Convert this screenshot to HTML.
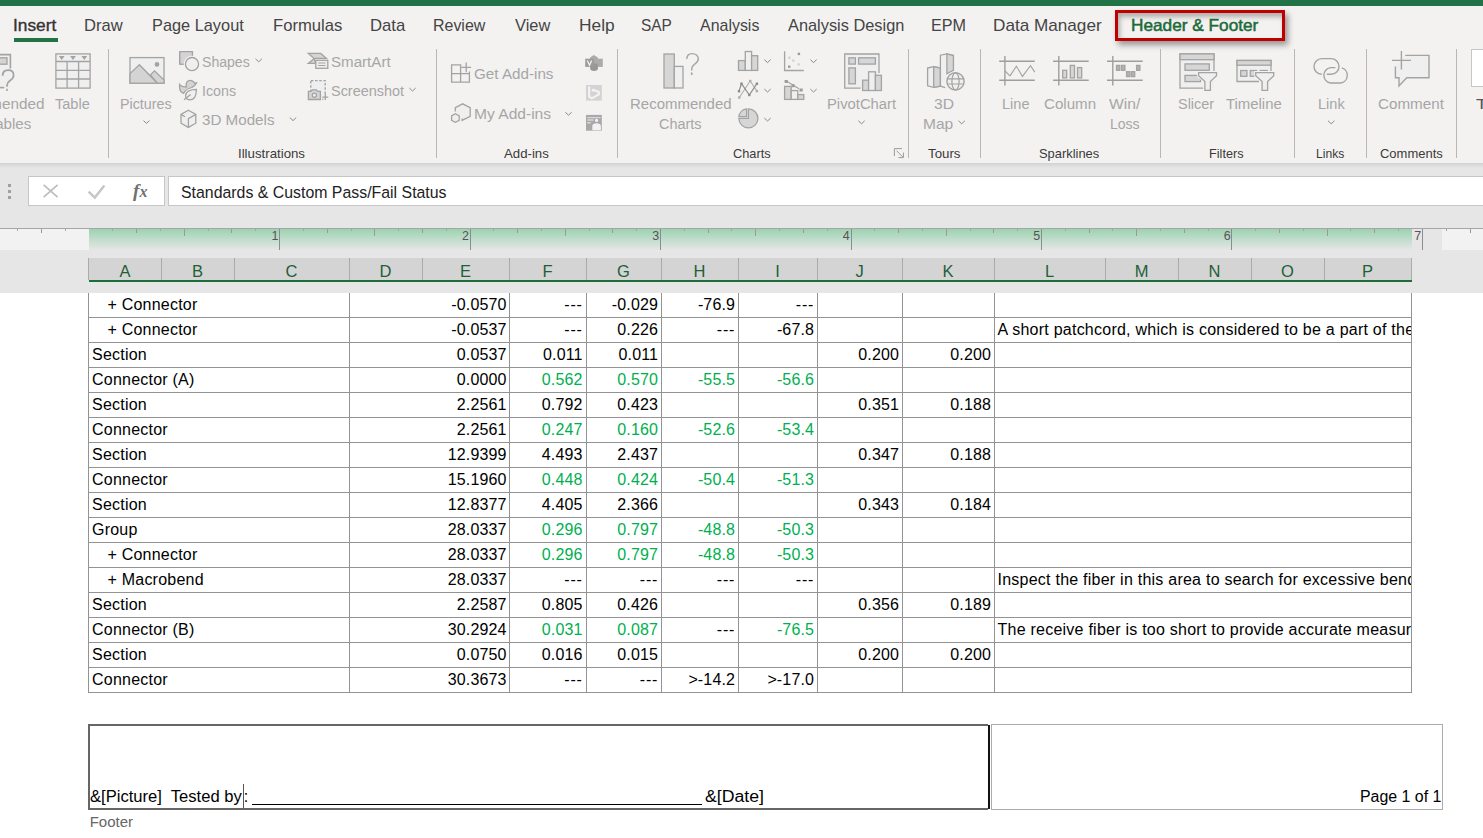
<!DOCTYPE html>
<html><head><meta charset="utf-8"><title>Excel</title><style>
html,body{margin:0;padding:0;width:1483px;height:838px;overflow:hidden;background:#fff;font-family:"Liberation Sans",sans-serif}
.t{position:absolute;white-space:pre;line-height:1;transform-origin:0 0}
.a{position:absolute;box-sizing:content-box}
svg{position:absolute;overflow:visible}
</style></head><body>
<div class=a style="left:0px;top:0px;width:1483px;height:6px;background:#217346"></div><div class=a style="left:0px;top:6px;width:1483px;height:157px;background:#f3f2f1"></div><div class=a style="left:0px;top:163px;width:1483px;height:5px;background:linear-gradient(#d2d2d2,#e6e6e6)"></div><div class=a style="left:0px;top:168px;width:1483px;height:125px;background:#e6e6e6"></div><div class=a style="left:1115px;top:10px;width:164px;height:25px;border:3px solid #c00000;box-shadow:3px 4px 6px rgba(0,0,0,.38), inset 2px 4px 5px rgba(0,0,0,.28);"></div><div class=a style="left:14px;top:38px;width:44px;height:4px;background:#217346"></div><div class=a style="left:108px;top:49px;width:1px;height:109px;background:#b9b6b3"></div><div class=a style="left:436px;top:49px;width:1px;height:109px;background:#b9b6b3"></div><div class=a style="left:617px;top:49px;width:1px;height:109px;background:#b9b6b3"></div><div class=a style="left:908px;top:49px;width:1px;height:109px;background:#b9b6b3"></div><div class=a style="left:980px;top:49px;width:1px;height:109px;background:#b9b6b3"></div><div class=a style="left:1160px;top:49px;width:1px;height:109px;background:#b9b6b3"></div><div class=a style="left:1294px;top:49px;width:1px;height:109px;background:#b9b6b3"></div><div class=a style="left:1366px;top:49px;width:1px;height:109px;background:#b9b6b3"></div><div class=a style="left:1456px;top:49px;width:1px;height:109px;background:#b9b6b3"></div><div class=a style="left:1471px;top:49px;width:12px;height:36px;background:#fff;border:1px solid #c8c6c4;border-right:none"></div><div class=a style="left:28px;top:176px;width:135px;height:28px;background:#fff;border:1px solid #c6c6c6"></div><div class=a style="left:168px;top:176px;width:1320px;height:28px;background:#fff;border:1px solid #c6c6c6"></div><div class=a style="left:8px;top:184px;width:3px;height:3px;background:#a0a0a0"></div><div class=a style="left:8px;top:190px;width:3px;height:3px;background:#a0a0a0"></div><div class=a style="left:8px;top:196px;width:3px;height:3px;background:#a0a0a0"></div><div class=a style="left:0px;top:228px;width:1483px;height:1px;background:#a6a6a6"></div><div class=a style="left:0px;top:229px;width:89px;height:21px;background:#f2f2f2"></div><div class=a style="left:89px;top:229px;width:1323px;height:21px;background:linear-gradient(#9cd3b1,#e6e6e6)"></div><div class=a style="left:1442px;top:229px;width:41px;height:21px;background:#f2f2f2"></div><div class=a style="left:17px;top:229px;width:1px;height:2px;background:#a6a6a6"></div><div class=a style="left:41px;top:229px;width:1px;height:4px;background:#9a9a9a"></div><div class=a style="left:65px;top:229px;width:1px;height:2px;background:#a6a6a6"></div><div class=a style="left:112px;top:229px;width:1px;height:2px;background:#a6a6a6"></div><div class=a style="left:136px;top:229px;width:1px;height:4px;background:#9a9a9a"></div><div class=a style="left:160px;top:229px;width:1px;height:2px;background:#a6a6a6"></div><div class=a style="left:184px;top:229px;width:1px;height:7px;background:#9a9a9a"></div><div class=a style="left:208px;top:229px;width:1px;height:2px;background:#a6a6a6"></div><div class=a style="left:231px;top:229px;width:1px;height:4px;background:#9a9a9a"></div><div class=a style="left:255px;top:229px;width:1px;height:2px;background:#a6a6a6"></div><div class=a style="left:279px;top:229px;width:1px;height:21px;background:#8c8c8c"></div><div class=a style="left:303px;top:229px;width:1px;height:2px;background:#a6a6a6"></div><div class=a style="left:327px;top:229px;width:1px;height:4px;background:#9a9a9a"></div><div class=a style="left:351px;top:229px;width:1px;height:2px;background:#a6a6a6"></div><div class=a style="left:374px;top:229px;width:1px;height:7px;background:#9a9a9a"></div><div class=a style="left:398px;top:229px;width:1px;height:2px;background:#a6a6a6"></div><div class=a style="left:422px;top:229px;width:1px;height:4px;background:#9a9a9a"></div><div class=a style="left:446px;top:229px;width:1px;height:2px;background:#a6a6a6"></div><div class=a style="left:470px;top:229px;width:1px;height:21px;background:#8c8c8c"></div><div class=a style="left:493px;top:229px;width:1px;height:2px;background:#a6a6a6"></div><div class=a style="left:517px;top:229px;width:1px;height:4px;background:#9a9a9a"></div><div class=a style="left:541px;top:229px;width:1px;height:2px;background:#a6a6a6"></div><div class=a style="left:565px;top:229px;width:1px;height:7px;background:#9a9a9a"></div><div class=a style="left:589px;top:229px;width:1px;height:2px;background:#a6a6a6"></div><div class=a style="left:612px;top:229px;width:1px;height:4px;background:#9a9a9a"></div><div class=a style="left:636px;top:229px;width:1px;height:2px;background:#a6a6a6"></div><div class=a style="left:660px;top:229px;width:1px;height:21px;background:#8c8c8c"></div><div class=a style="left:684px;top:229px;width:1px;height:2px;background:#a6a6a6"></div><div class=a style="left:708px;top:229px;width:1px;height:4px;background:#9a9a9a"></div><div class=a style="left:731px;top:229px;width:1px;height:2px;background:#a6a6a6"></div><div class=a style="left:755px;top:229px;width:1px;height:7px;background:#9a9a9a"></div><div class=a style="left:779px;top:229px;width:1px;height:2px;background:#a6a6a6"></div><div class=a style="left:803px;top:229px;width:1px;height:4px;background:#9a9a9a"></div><div class=a style="left:827px;top:229px;width:1px;height:2px;background:#a6a6a6"></div><div class=a style="left:851px;top:229px;width:1px;height:21px;background:#8c8c8c"></div><div class=a style="left:874px;top:229px;width:1px;height:2px;background:#a6a6a6"></div><div class=a style="left:898px;top:229px;width:1px;height:4px;background:#9a9a9a"></div><div class=a style="left:922px;top:229px;width:1px;height:2px;background:#a6a6a6"></div><div class=a style="left:946px;top:229px;width:1px;height:7px;background:#9a9a9a"></div><div class=a style="left:970px;top:229px;width:1px;height:2px;background:#a6a6a6"></div><div class=a style="left:993px;top:229px;width:1px;height:4px;background:#9a9a9a"></div><div class=a style="left:1017px;top:229px;width:1px;height:2px;background:#a6a6a6"></div><div class=a style="left:1041px;top:229px;width:1px;height:21px;background:#8c8c8c"></div><div class=a style="left:1065px;top:229px;width:1px;height:2px;background:#a6a6a6"></div><div class=a style="left:1089px;top:229px;width:1px;height:4px;background:#9a9a9a"></div><div class=a style="left:1112px;top:229px;width:1px;height:2px;background:#a6a6a6"></div><div class=a style="left:1136px;top:229px;width:1px;height:7px;background:#9a9a9a"></div><div class=a style="left:1160px;top:229px;width:1px;height:2px;background:#a6a6a6"></div><div class=a style="left:1184px;top:229px;width:1px;height:4px;background:#9a9a9a"></div><div class=a style="left:1208px;top:229px;width:1px;height:2px;background:#a6a6a6"></div><div class=a style="left:1231px;top:229px;width:1px;height:21px;background:#8c8c8c"></div><div class=a style="left:1255px;top:229px;width:1px;height:2px;background:#a6a6a6"></div><div class=a style="left:1279px;top:229px;width:1px;height:4px;background:#9a9a9a"></div><div class=a style="left:1303px;top:229px;width:1px;height:2px;background:#a6a6a6"></div><div class=a style="left:1327px;top:229px;width:1px;height:7px;background:#9a9a9a"></div><div class=a style="left:1350px;top:229px;width:1px;height:2px;background:#a6a6a6"></div><div class=a style="left:1374px;top:229px;width:1px;height:4px;background:#9a9a9a"></div><div class=a style="left:1398px;top:229px;width:1px;height:2px;background:#a6a6a6"></div><div class=a style="left:1422px;top:229px;width:1px;height:21px;background:#8c8c8c"></div><div class=a style="left:1446px;top:229px;width:1px;height:2px;background:#a6a6a6"></div><div class=a style="left:1470px;top:229px;width:1px;height:4px;background:#9a9a9a"></div><div class=t style="left:271.4px;top:229.6px;font-size:12.5px;color:#555">1</div><div class=t style="left:461.9px;top:229.6px;font-size:12.5px;color:#555">2</div><div class=t style="left:652.3px;top:229.6px;font-size:12.5px;color:#555">3</div><div class=t style="left:842.8px;top:229.6px;font-size:12.5px;color:#555">4</div><div class=t style="left:1033.3px;top:229.6px;font-size:12.5px;color:#555">5</div><div class=t style="left:1223.7px;top:229.6px;font-size:12.5px;color:#555">6</div><div class=t style="left:1414.2px;top:229.6px;font-size:12.5px;color:#555">7</div><div class=a style="left:89px;top:258px;width:1323px;height:22px;background:#d4d4d4"></div><div class=a style="left:89px;top:280px;width:1323px;height:2px;background:#1e6e3c"></div><div class=a style="left:88px;top:258px;width:1px;height:22px;background:#ababab"></div><div class=a style="left:161px;top:258px;width:1px;height:22px;background:#ababab"></div><div class=a style="left:234px;top:258px;width:1px;height:22px;background:#ababab"></div><div class=a style="left:349px;top:258px;width:1px;height:22px;background:#ababab"></div><div class=a style="left:422px;top:258px;width:1px;height:22px;background:#ababab"></div><div class=a style="left:509px;top:258px;width:1px;height:22px;background:#ababab"></div><div class=a style="left:586px;top:258px;width:1px;height:22px;background:#ababab"></div><div class=a style="left:661px;top:258px;width:1px;height:22px;background:#ababab"></div><div class=a style="left:738px;top:258px;width:1px;height:22px;background:#ababab"></div><div class=a style="left:817px;top:258px;width:1px;height:22px;background:#ababab"></div><div class=a style="left:902px;top:258px;width:1px;height:22px;background:#ababab"></div><div class=a style="left:994px;top:258px;width:1px;height:22px;background:#ababab"></div><div class=a style="left:1105px;top:258px;width:1px;height:22px;background:#ababab"></div><div class=a style="left:1178px;top:258px;width:1px;height:22px;background:#ababab"></div><div class=a style="left:1251px;top:258px;width:1px;height:22px;background:#ababab"></div><div class=a style="left:1324px;top:258px;width:1px;height:22px;background:#ababab"></div><div class=a style="left:1411px;top:258px;width:1px;height:22px;background:#ababab"></div><div class=t style="left:89px;width:72px;top:262.5px;font-size:16.5px;color:#1e5f38;text-align:center">A</div><div class=t style="left:161px;width:73px;top:262.5px;font-size:16.5px;color:#1e5f38;text-align:center">B</div><div class=t style="left:234px;width:115px;top:262.5px;font-size:16.5px;color:#1e5f38;text-align:center">C</div><div class=t style="left:349px;width:73px;top:262.5px;font-size:16.5px;color:#1e5f38;text-align:center">D</div><div class=t style="left:422px;width:87px;top:262.5px;font-size:16.5px;color:#1e5f38;text-align:center">E</div><div class=t style="left:509px;width:77px;top:262.5px;font-size:16.5px;color:#1e5f38;text-align:center">F</div><div class=t style="left:586px;width:75px;top:262.5px;font-size:16.5px;color:#1e5f38;text-align:center">G</div><div class=t style="left:661px;width:77px;top:262.5px;font-size:16.5px;color:#1e5f38;text-align:center">H</div><div class=t style="left:738px;width:79px;top:262.5px;font-size:16.5px;color:#1e5f38;text-align:center">I</div><div class=t style="left:817px;width:85px;top:262.5px;font-size:16.5px;color:#1e5f38;text-align:center">J</div><div class=t style="left:902px;width:92px;top:262.5px;font-size:16.5px;color:#1e5f38;text-align:center">K</div><div class=t style="left:994px;width:111px;top:262.5px;font-size:16.5px;color:#1e5f38;text-align:center">L</div><div class=t style="left:1105px;width:73px;top:262.5px;font-size:16.5px;color:#1e5f38;text-align:center">M</div><div class=t style="left:1178px;width:73px;top:262.5px;font-size:16.5px;color:#1e5f38;text-align:center">N</div><div class=t style="left:1251px;width:73px;top:262.5px;font-size:16.5px;color:#1e5f38;text-align:center">O</div><div class=t style="left:1324px;width:87px;top:262.5px;font-size:16.5px;color:#1e5f38;text-align:center">P</div><div class=a style="left:0px;top:293px;width:1483px;height:545px;background:#fff"></div><div class=a style="left:88px;top:317px;width:1324px;height:1px;background:#939393"></div><div class=a style="left:88px;top:342px;width:1324px;height:1px;background:#939393"></div><div class=a style="left:88px;top:367px;width:1324px;height:1px;background:#939393"></div><div class=a style="left:88px;top:392px;width:1324px;height:1px;background:#939393"></div><div class=a style="left:88px;top:417px;width:1324px;height:1px;background:#939393"></div><div class=a style="left:88px;top:442px;width:1324px;height:1px;background:#939393"></div><div class=a style="left:88px;top:467px;width:1324px;height:1px;background:#939393"></div><div class=a style="left:88px;top:492px;width:1324px;height:1px;background:#939393"></div><div class=a style="left:88px;top:517px;width:1324px;height:1px;background:#939393"></div><div class=a style="left:88px;top:542px;width:1324px;height:1px;background:#939393"></div><div class=a style="left:88px;top:567px;width:1324px;height:1px;background:#939393"></div><div class=a style="left:88px;top:592px;width:1324px;height:1px;background:#939393"></div><div class=a style="left:88px;top:617px;width:1324px;height:1px;background:#939393"></div><div class=a style="left:88px;top:642px;width:1324px;height:1px;background:#939393"></div><div class=a style="left:88px;top:667px;width:1324px;height:1px;background:#939393"></div><div class=a style="left:88px;top:692px;width:1324px;height:1px;background:#939393"></div><div class=a style="left:88px;top:293px;width:1px;height:399px;background:#939393"></div><div class=a style="left:349px;top:293px;width:1px;height:399px;background:#939393"></div><div class=a style="left:509px;top:293px;width:1px;height:399px;background:#939393"></div><div class=a style="left:586px;top:293px;width:1px;height:399px;background:#939393"></div><div class=a style="left:661px;top:293px;width:1px;height:399px;background:#939393"></div><div class=a style="left:738px;top:293px;width:1px;height:399px;background:#939393"></div><div class=a style="left:817px;top:293px;width:1px;height:399px;background:#939393"></div><div class=a style="left:902px;top:293px;width:1px;height:399px;background:#939393"></div><div class=a style="left:994px;top:293px;width:1px;height:399px;background:#939393"></div><div class=a style="left:1411px;top:293px;width:1px;height:399px;background:#939393"></div><div class=t style="left:107.5px;top:297.2px;font-size:16px;letter-spacing:0.22px;color:#000">+ Connector</div><div class=t style="left:306.6px;width:200px;text-align:right;top:297.2px;font-size:16px;letter-spacing:0.15px;color:#000">-0.0570</div><div class=t style="left:382.6px;width:200px;text-align:right;top:297.2px;font-size:16px;letter-spacing:0.75px;color:#000">---</div><div class=t style="left:458.1px;width:200px;text-align:right;top:297.2px;font-size:16px;letter-spacing:0.15px;color:#000">-0.029</div><div class=t style="left:535.1px;width:200px;text-align:right;top:297.2px;font-size:16px;letter-spacing:0.15px;color:#000">-76.9</div><div class=t style="left:614.1px;width:200px;text-align:right;top:297.2px;font-size:16px;letter-spacing:0.75px;color:#000">---</div><div class=t style="left:107.5px;top:322.2px;font-size:16px;letter-spacing:0.22px;color:#000">+ Connector</div><div class=t style="left:306.6px;width:200px;text-align:right;top:322.2px;font-size:16px;letter-spacing:0.15px;color:#000">-0.0537</div><div class=t style="left:382.6px;width:200px;text-align:right;top:322.2px;font-size:16px;letter-spacing:0.75px;color:#000">---</div><div class=t style="left:458.1px;width:200px;text-align:right;top:322.2px;font-size:16px;letter-spacing:0.15px;color:#000">0.226</div><div class=t style="left:535.1px;width:200px;text-align:right;top:322.2px;font-size:16px;letter-spacing:0.75px;color:#000">---</div><div class=t style="left:614.1px;width:200px;text-align:right;top:322.2px;font-size:16px;letter-spacing:0.15px;color:#000">-67.8</div><div class=a style="left:996px;top:318px;width:415px;height:24px;overflow:hidden"><div class=t style="left:1.5px;top:4.2px;font-size:16px;letter-spacing:0.24px;color:#000">A short patchcord, which is considered to be a part of the</div></div><div class=t style="left:92px;top:347.2px;font-size:16px;letter-spacing:0.22px;color:#000">Section</div><div class=t style="left:306.6px;width:200px;text-align:right;top:347.2px;font-size:16px;letter-spacing:0.15px;color:#000">0.0537</div><div class=t style="left:382.6px;width:200px;text-align:right;top:347.2px;font-size:16px;letter-spacing:0.15px;color:#000">0.011</div><div class=t style="left:458.1px;width:200px;text-align:right;top:347.2px;font-size:16px;letter-spacing:0.15px;color:#000">0.011</div><div class=t style="left:699.1px;width:200px;text-align:right;top:347.2px;font-size:16px;letter-spacing:0.15px;color:#000">0.200</div><div class=t style="left:791.1px;width:200px;text-align:right;top:347.2px;font-size:16px;letter-spacing:0.15px;color:#000">0.200</div><div class=t style="left:92px;top:372.2px;font-size:16px;letter-spacing:0.22px;color:#000">Connector (A)</div><div class=t style="left:306.6px;width:200px;text-align:right;top:372.2px;font-size:16px;letter-spacing:0.15px;color:#000">0.0000</div><div class=t style="left:382.6px;width:200px;text-align:right;top:372.2px;font-size:16px;letter-spacing:0.15px;color:#00b050">0.562</div><div class=t style="left:458.1px;width:200px;text-align:right;top:372.2px;font-size:16px;letter-spacing:0.15px;color:#00b050">0.570</div><div class=t style="left:535.1px;width:200px;text-align:right;top:372.2px;font-size:16px;letter-spacing:0.15px;color:#00b050">-55.5</div><div class=t style="left:614.1px;width:200px;text-align:right;top:372.2px;font-size:16px;letter-spacing:0.15px;color:#00b050">-56.6</div><div class=t style="left:92px;top:397.2px;font-size:16px;letter-spacing:0.22px;color:#000">Section</div><div class=t style="left:306.6px;width:200px;text-align:right;top:397.2px;font-size:16px;letter-spacing:0.15px;color:#000">2.2561</div><div class=t style="left:382.6px;width:200px;text-align:right;top:397.2px;font-size:16px;letter-spacing:0.15px;color:#000">0.792</div><div class=t style="left:458.1px;width:200px;text-align:right;top:397.2px;font-size:16px;letter-spacing:0.15px;color:#000">0.423</div><div class=t style="left:699.1px;width:200px;text-align:right;top:397.2px;font-size:16px;letter-spacing:0.15px;color:#000">0.351</div><div class=t style="left:791.1px;width:200px;text-align:right;top:397.2px;font-size:16px;letter-spacing:0.15px;color:#000">0.188</div><div class=t style="left:92px;top:422.2px;font-size:16px;letter-spacing:0.22px;color:#000">Connector</div><div class=t style="left:306.6px;width:200px;text-align:right;top:422.2px;font-size:16px;letter-spacing:0.15px;color:#000">2.2561</div><div class=t style="left:382.6px;width:200px;text-align:right;top:422.2px;font-size:16px;letter-spacing:0.15px;color:#00b050">0.247</div><div class=t style="left:458.1px;width:200px;text-align:right;top:422.2px;font-size:16px;letter-spacing:0.15px;color:#00b050">0.160</div><div class=t style="left:535.1px;width:200px;text-align:right;top:422.2px;font-size:16px;letter-spacing:0.15px;color:#00b050">-52.6</div><div class=t style="left:614.1px;width:200px;text-align:right;top:422.2px;font-size:16px;letter-spacing:0.15px;color:#00b050">-53.4</div><div class=t style="left:92px;top:447.2px;font-size:16px;letter-spacing:0.22px;color:#000">Section</div><div class=t style="left:306.6px;width:200px;text-align:right;top:447.2px;font-size:16px;letter-spacing:0.15px;color:#000">12.9399</div><div class=t style="left:382.6px;width:200px;text-align:right;top:447.2px;font-size:16px;letter-spacing:0.15px;color:#000">4.493</div><div class=t style="left:458.1px;width:200px;text-align:right;top:447.2px;font-size:16px;letter-spacing:0.15px;color:#000">2.437</div><div class=t style="left:699.1px;width:200px;text-align:right;top:447.2px;font-size:16px;letter-spacing:0.15px;color:#000">0.347</div><div class=t style="left:791.1px;width:200px;text-align:right;top:447.2px;font-size:16px;letter-spacing:0.15px;color:#000">0.188</div><div class=t style="left:92px;top:472.2px;font-size:16px;letter-spacing:0.22px;color:#000">Connector</div><div class=t style="left:306.6px;width:200px;text-align:right;top:472.2px;font-size:16px;letter-spacing:0.15px;color:#000">15.1960</div><div class=t style="left:382.6px;width:200px;text-align:right;top:472.2px;font-size:16px;letter-spacing:0.15px;color:#00b050">0.448</div><div class=t style="left:458.1px;width:200px;text-align:right;top:472.2px;font-size:16px;letter-spacing:0.15px;color:#00b050">0.424</div><div class=t style="left:535.1px;width:200px;text-align:right;top:472.2px;font-size:16px;letter-spacing:0.15px;color:#00b050">-50.4</div><div class=t style="left:614.1px;width:200px;text-align:right;top:472.2px;font-size:16px;letter-spacing:0.15px;color:#00b050">-51.3</div><div class=t style="left:92px;top:497.2px;font-size:16px;letter-spacing:0.22px;color:#000">Section</div><div class=t style="left:306.6px;width:200px;text-align:right;top:497.2px;font-size:16px;letter-spacing:0.15px;color:#000">12.8377</div><div class=t style="left:382.6px;width:200px;text-align:right;top:497.2px;font-size:16px;letter-spacing:0.15px;color:#000">4.405</div><div class=t style="left:458.1px;width:200px;text-align:right;top:497.2px;font-size:16px;letter-spacing:0.15px;color:#000">2.366</div><div class=t style="left:699.1px;width:200px;text-align:right;top:497.2px;font-size:16px;letter-spacing:0.15px;color:#000">0.343</div><div class=t style="left:791.1px;width:200px;text-align:right;top:497.2px;font-size:16px;letter-spacing:0.15px;color:#000">0.184</div><div class=t style="left:92px;top:522.2px;font-size:16px;letter-spacing:0.22px;color:#000">Group</div><div class=t style="left:306.6px;width:200px;text-align:right;top:522.2px;font-size:16px;letter-spacing:0.15px;color:#000">28.0337</div><div class=t style="left:382.6px;width:200px;text-align:right;top:522.2px;font-size:16px;letter-spacing:0.15px;color:#00b050">0.296</div><div class=t style="left:458.1px;width:200px;text-align:right;top:522.2px;font-size:16px;letter-spacing:0.15px;color:#00b050">0.797</div><div class=t style="left:535.1px;width:200px;text-align:right;top:522.2px;font-size:16px;letter-spacing:0.15px;color:#00b050">-48.8</div><div class=t style="left:614.1px;width:200px;text-align:right;top:522.2px;font-size:16px;letter-spacing:0.15px;color:#00b050">-50.3</div><div class=t style="left:107.5px;top:547.2px;font-size:16px;letter-spacing:0.22px;color:#000">+ Connector</div><div class=t style="left:306.6px;width:200px;text-align:right;top:547.2px;font-size:16px;letter-spacing:0.15px;color:#000">28.0337</div><div class=t style="left:382.6px;width:200px;text-align:right;top:547.2px;font-size:16px;letter-spacing:0.15px;color:#00b050">0.296</div><div class=t style="left:458.1px;width:200px;text-align:right;top:547.2px;font-size:16px;letter-spacing:0.15px;color:#00b050">0.797</div><div class=t style="left:535.1px;width:200px;text-align:right;top:547.2px;font-size:16px;letter-spacing:0.15px;color:#00b050">-48.8</div><div class=t style="left:614.1px;width:200px;text-align:right;top:547.2px;font-size:16px;letter-spacing:0.15px;color:#00b050">-50.3</div><div class=t style="left:107.5px;top:572.2px;font-size:16px;letter-spacing:0.22px;color:#000">+ Macrobend</div><div class=t style="left:306.6px;width:200px;text-align:right;top:572.2px;font-size:16px;letter-spacing:0.15px;color:#000">28.0337</div><div class=t style="left:382.6px;width:200px;text-align:right;top:572.2px;font-size:16px;letter-spacing:0.75px;color:#000">---</div><div class=t style="left:458.1px;width:200px;text-align:right;top:572.2px;font-size:16px;letter-spacing:0.75px;color:#000">---</div><div class=t style="left:535.1px;width:200px;text-align:right;top:572.2px;font-size:16px;letter-spacing:0.75px;color:#000">---</div><div class=t style="left:614.1px;width:200px;text-align:right;top:572.2px;font-size:16px;letter-spacing:0.75px;color:#000">---</div><div class=a style="left:996px;top:568px;width:415px;height:24px;overflow:hidden"><div class=t style="left:1.5px;top:4.2px;font-size:16px;letter-spacing:0.24px;color:#000">Inspect the fiber in this area to search for excessive bend</div></div><div class=t style="left:92px;top:597.2px;font-size:16px;letter-spacing:0.22px;color:#000">Section</div><div class=t style="left:306.6px;width:200px;text-align:right;top:597.2px;font-size:16px;letter-spacing:0.15px;color:#000">2.2587</div><div class=t style="left:382.6px;width:200px;text-align:right;top:597.2px;font-size:16px;letter-spacing:0.15px;color:#000">0.805</div><div class=t style="left:458.1px;width:200px;text-align:right;top:597.2px;font-size:16px;letter-spacing:0.15px;color:#000">0.426</div><div class=t style="left:699.1px;width:200px;text-align:right;top:597.2px;font-size:16px;letter-spacing:0.15px;color:#000">0.356</div><div class=t style="left:791.1px;width:200px;text-align:right;top:597.2px;font-size:16px;letter-spacing:0.15px;color:#000">0.189</div><div class=t style="left:92px;top:622.2px;font-size:16px;letter-spacing:0.22px;color:#000">Connector (B)</div><div class=t style="left:306.6px;width:200px;text-align:right;top:622.2px;font-size:16px;letter-spacing:0.15px;color:#000">30.2924</div><div class=t style="left:382.6px;width:200px;text-align:right;top:622.2px;font-size:16px;letter-spacing:0.15px;color:#00b050">0.031</div><div class=t style="left:458.1px;width:200px;text-align:right;top:622.2px;font-size:16px;letter-spacing:0.15px;color:#00b050">0.087</div><div class=t style="left:535.1px;width:200px;text-align:right;top:622.2px;font-size:16px;letter-spacing:0.75px;color:#000">---</div><div class=t style="left:614.1px;width:200px;text-align:right;top:622.2px;font-size:16px;letter-spacing:0.15px;color:#00b050">-76.5</div><div class=a style="left:996px;top:618px;width:415px;height:24px;overflow:hidden"><div class=t style="left:1.5px;top:4.2px;font-size:16px;letter-spacing:0.24px;color:#000">The receive fiber is too short to provide accurate measure</div></div><div class=t style="left:92px;top:647.2px;font-size:16px;letter-spacing:0.22px;color:#000">Section</div><div class=t style="left:306.6px;width:200px;text-align:right;top:647.2px;font-size:16px;letter-spacing:0.15px;color:#000">0.0750</div><div class=t style="left:382.6px;width:200px;text-align:right;top:647.2px;font-size:16px;letter-spacing:0.15px;color:#000">0.016</div><div class=t style="left:458.1px;width:200px;text-align:right;top:647.2px;font-size:16px;letter-spacing:0.15px;color:#000">0.015</div><div class=t style="left:699.1px;width:200px;text-align:right;top:647.2px;font-size:16px;letter-spacing:0.15px;color:#000">0.200</div><div class=t style="left:791.1px;width:200px;text-align:right;top:647.2px;font-size:16px;letter-spacing:0.15px;color:#000">0.200</div><div class=t style="left:92px;top:672.2px;font-size:16px;letter-spacing:0.22px;color:#000">Connector</div><div class=t style="left:306.6px;width:200px;text-align:right;top:672.2px;font-size:16px;letter-spacing:0.15px;color:#000">30.3673</div><div class=t style="left:382.6px;width:200px;text-align:right;top:672.2px;font-size:16px;letter-spacing:0.75px;color:#000">---</div><div class=t style="left:458.1px;width:200px;text-align:right;top:672.2px;font-size:16px;letter-spacing:0.75px;color:#000">---</div><div class=t style="left:535.1px;width:200px;text-align:right;top:672.2px;font-size:16px;letter-spacing:0.15px;color:#000">&gt;-14.2</div><div class=t style="left:614.1px;width:200px;text-align:right;top:672.2px;font-size:16px;letter-spacing:0.15px;color:#000">&gt;-17.0</div><div class=a style="left:88px;top:724px;width:898px;height:82px;border:2px solid #666;border-right:none"></div><div class=a style="left:988px;top:725px;width:2px;height:84px;background:#111"></div><div class=a style="left:991px;top:724px;width:450px;height:84px;border:1px solid #ababab"></div><div class=a style="left:243px;top:784px;width:1px;height:24px;background:#555"></div><div class=a style="left:252px;top:804px;width:450px;height:1px;background:#000"></div>
<svg style="left:0;top:0" width="1483" height="215" viewBox="0 0 1483 215">
<g fill="none" stroke="#a3a3a3" stroke-width="1.3">
<!-- partial PivotTable -->
<rect x="-6" y="54.6" width="16.4" height="33" fill="#efefef" stroke="none"/>
<path d="M-6 54.6H10.4V68.5" stroke-width="1.6"/>
<rect x="-4" y="57.8" width="11" height="6.4" fill="#d4d4d4"/>
<path d="M-6 87.6H4.3" stroke-width="1.6"/>
<path d="M2.6 75.8C2.6 72 5 70.2 8.2 70.2C11.5 70.2 13.6 72.3 13.6 75.2C13.6 78.3 11.6 79.6 9.8 80.8C7.9 82.2 7 83.3 7 85.3V86.8" stroke-width="1.7"/>
<path d="M7 88.8V91" stroke-width="1.6"/>
<!-- Table -->
<rect x="55.9" y="53.9" width="34.2" height="34.2" fill="#efefef"/>
<path d="M55.9 61.5H90.1M55.9 70.3H90.1M55.9 79H90.1M67.1 61.5V88.1M78.6 61.5V88.1"/>
<path d="M58.8 56.1H64.6L61.7 59.9ZM70.1 56.1H75.9L73 59.9ZM81.4 56.1H87.2L84.3 59.9Z" fill="#a3a3a3" stroke="none"/>
<!-- Pictures -->
<rect x="130" y="57.6" width="34" height="25.6" fill="#efefef"/>
<path d="M130 73.6L139.4 64.7L157.4 83.2H130Z" fill="#d4d4d4"/>
<path d="M150.5 74.9L154.5 70.8L164 80V83.2H157.4Z" fill="#d4d4d4"/>
<circle cx="157" cy="64.4" r="2.3" fill="#a3a3a3" stroke="none"/>
<!-- Shapes -->
<path d="M179.8 51.7H192.4V57.6M186.2 64.2H179.8V51.7" fill="#d4d4d4"/>
<rect x="179.8" y="51.7" width="12.6" height="12.5" fill="#d4d4d4" stroke="none"/>
<path d="M179.8 64.2V51.7H192.4V57.4"/>
<path d="M179.8 64.2H185.4"/>
<circle cx="192" cy="64.1" r="6.6" fill="#efefef" stroke="#f3f2f1" stroke-width="3.5"/>
<circle cx="192" cy="64.1" r="6.6" fill="#efefef"/>
<!-- Icons -->
<path d="M179.6 84.6C181 86.5 183 87 186.4 86.8C185.2 82.8 187.5 80.4 190.2 80.4C192.4 80.4 193.8 81.7 194.8 83.2L196.6 82.8C195.8 84.8 194 86.6 191.6 87.6C188 89 185 90.5 183.6 93.3C181 92.5 179.6 90 179.6 87Z" fill="#d4d4d4"/>
<path d="M196.4 89.3C191.5 89.3 186.2 90.6 185.6 95.4C185.2 98.4 187.6 99.8 190 99.8C195.5 99.8 196.4 94 196.4 89.3Z" fill="#efefef" stroke="#f3f2f1" stroke-width="3"/>
<path d="M196.4 89.3C191.5 89.3 186.2 90.6 185.6 95.4C185.2 98.4 187.6 99.8 190 99.8C195.5 99.8 196.4 94 196.4 89.3Z" fill="#efefef"/>
<path d="M184 99.7L190.6 94.5"/>
<!-- 3D models -->
<path d="M188.4 110.2L195.8 114.4V123.2L188.4 127.4L181 123.2V114.4Z" fill="#efefef"/>
<path d="M181 114.4L185 116.7M195.8 114.4L188.4 118.6V127.4"/>
<!-- SmartArt -->
<path d="M308.3 53.4H320.8L326.3 58.3H315.8L314.2 58.6L308.3 63.4H315.6L314.2 58.6Z" fill="#d4d4d4" stroke-linejoin="miter"/>
<rect x="315.8" y="60.3" width="12" height="8" fill="#efefef"/>
<path d="M318.2 63H325.5M318.2 65.5H325.5" stroke-width="1"/>
<!-- Screenshot -->
<rect x="310.8" y="80.6" width="14.4" height="18.6" fill="#efefef" stroke-dasharray="2.6 1.6"/>
<path d="M308.4 91.4H310.8L312.3 89.8H316.4L317.9 91.4H320.4V99.5H308.4Z" fill="#d4d4d4" stroke="#a3a3a3"/>
<rect x="308" y="90.5" width="13" height="1" fill="none" stroke="none"/>
<circle cx="314.4" cy="95.2" r="2.1" fill="#efefef"/>
<path d="M322.3 97.1H328.3M325.3 94.1V100.1" stroke="#f3f2f1" stroke-width="3.5"/>
<path d="M322.3 97.1H328.3M325.3 94.1V100.1"/>
<!-- Get Add-ins -->
<path d="M451.6 64.9H460.6V82.2H451.6ZM451.6 73.6H469.4V82.2H460.6M469.4 73.6V71.5"/>
<path d="M461.3 67.4H471.1M466.2 62.5V72.3"/>
<!-- My Add-ins -->
<path d="M455.3 111.6V107.6L462.6 103.8L470.2 107.6V116.4L462.1 120.4V118.6" fill="#efefef"/>
<path d="M455.4 113.8L459.2 115.9V120.3L455.4 122.3L451.6 120.3V115.9Z" fill="#efefef"/>
<!-- Visio -->
<path d="M590 57.5L593.8 54.9L597.9 57.5V66H590Z" fill="#ababab" stroke="none"/>
<rect x="593.9" y="58.7" width="8.9" height="8.2" fill="#ababab" stroke="none"/>
<path d="M590.2 65.5C590.2 63.8 591.5 63.2 594 63.2C596.5 63.2 597.9 63.8 597.9 66V68.6C597.9 70.2 596.6 70.9 594 70.9C591.4 70.9 590.2 70.2 590.2 68.6Z" fill="#979797" stroke="none"/>
<rect x="585.2" y="58.7" width="8.7" height="8.2" fill="#9c9c9c" stroke="none"/>
<path d="M587.3 60.4L589.5 65.2L591.7 60.4" stroke="#f4f0f4" stroke-width="1.3"/>
<!-- Bing -->
<rect x="586" y="85" width="15.8" height="15.6" fill="#d3d3d3" stroke="none"/>
<path d="M589.2 86.6V96.6L591.8 98.3L598.8 94.4V92L593.2 89.8L592.2 91.4" stroke="#f6f2f6" stroke-width="2.1"/>
<!-- third -->
<rect x="586" y="114.9" width="15.8" height="15.8" fill="#a8a8a8" stroke="none"/>
<path d="M587.2 117.6H600.6M587.2 120H593.6M587.2 122.8H590.8" stroke="#d6d6d6" stroke-width="1.4"/>
<circle cx="596.6" cy="120.4" r="1.6" fill="#f4f0f4" stroke="none"/>
<path d="M592.3 130.2V126C592.3 124.2 594 123.3 596.6 123.3C599.2 123.3 600.9 124.2 600.9 126V130.2Z" fill="#f4f0f4" stroke="none"/>
<!-- Recommended charts -->
<rect x="664" y="54" width="10.3" height="34" fill="#d6d6d6"/>
<rect x="674.3" y="66.4" width="8.7" height="21.6" fill="#efefef"/>
<path d="M686.8 59C686.8 55.3 689.4 53.6 692.3 53.6C695.4 53.6 698.3 55.6 698.3 58.8C698.3 62 696 63.2 694.2 64.6C692.6 65.8 691.7 66.7 691.7 68.8V70.6" stroke-width="1.4"/>
<path d="M691.7 72.4V75" stroke-width="1.6"/>
<!-- Column chart -->
<rect x="738.5" y="60.6" width="6.8" height="9.8" fill="#d6d6d6"/>
<rect x="745.3" y="51.5" width="6.3" height="18.9" fill="#efefef"/>
<rect x="751.6" y="55.7" width="6.1" height="14.7" fill="#d6d6d6"/>
<!-- line chart -->
<path d="M739.3 97.5L750.2 81L756.9 91.1" stroke="#b0b0b0" stroke-width="1.1"/>
<path d="M739 91.1L741.5 83.7L749.3 95L756.9 83.7" stroke="#8e8e8e" stroke-width="1.2"/>
<g fill="#8c8c8c" stroke="none"><rect x="737.8" y="90" width="2.4" height="2.4"/><rect x="740.3" y="82.5" width="2.4" height="2.4"/><rect x="748.1" y="93.8" width="2.4" height="2.4"/><rect x="755.7" y="82.5" width="2.4" height="2.4"/></g>
<g fill="#adadad" stroke="none"><rect x="738.1" y="96.3" width="2.4" height="2.4"/><rect x="749" y="79.8" width="2.4" height="2.4"/><rect x="755.7" y="89.9" width="2.4" height="2.4"/></g>
<!-- pie -->
<path d="M748.4 118.4V108.9A9.5 9.5 0 1 1 738.9 118.4Z" fill="#d6d6d6"/>
<path d="M746.6 116.6V108.9A8.8 8.8 0 0 0 738.9 116.6Z" fill="#d6d6d6"/>
<!-- scatter -->
<path d="M784.6 51.2V70.5H803.8"/>
<g fill="#9c9c9c" stroke="none"><rect x="797.7" y="52.7" width="2.4" height="2.4"/><rect x="788" y="65.5" width="2.4" height="2.4"/></g>
<g fill="#cfcfcf" stroke="none"><rect x="788.3" y="56.6" width="2.2" height="2.2"/><rect x="792.2" y="59.5" width="2.2" height="2.2"/><rect x="797.6" y="63.3" width="2.2" height="2.2"/></g>
<!-- waterfall -->
<rect x="784.6" y="86.4" width="6.6" height="13" fill="#d6d6d6"/>
<rect x="791.2" y="90.6" width="6.6" height="8.8" fill="#efefef"/>
<rect x="797.8" y="94.6" width="6" height="4.8" fill="#d6d6d6"/>
<path d="M787 81.4L792 84.4L799 88.8" stroke-width="1.2"/>
<g fill="#9c9c9c" stroke="none"><rect x="784.6" y="80" width="3.2" height="3"/><rect x="791.6" y="84.2" width="3" height="3"/><rect x="799.5" y="88.5" width="3.2" height="3"/></g>
<!-- PivotChart -->
<path d="M860.6 88.2H844.7V54H879V72.9" fill="#efefef"/>
<rect x="848.9" y="57.8" width="6.5" height="6.3" fill="#d6d6d6"/>
<rect x="858.6" y="57.8" width="16.8" height="6.3" fill="#d6d6d6"/>
<rect x="848.9" y="67.9" width="6.5" height="15.9" fill="#d6d6d6"/>
<rect x="862.6" y="80.2" width="6" height="10.3" fill="#d6d6d6"/>
<rect x="868.6" y="71.8" width="6.8" height="18.7" fill="#efefef"/>
<rect x="875.4" y="75.3" width="6" height="15.2" fill="#d6d6d6"/>
<!-- 3D Map -->
<path d="M927.6 68L933.7 66.6L940.4 68V86.2L933.7 87.3L927.6 85.8Z" fill="#efefef"/>
<path d="M933.7 66.6V87.3" />
<path d="M933.7 66.6L940.4 68V86.2L933.7 87.3Z" fill="#d6d6d6"/>
<path d="M940.4 86.2V55.2L946.9 53.8L953.4 55.6V70.4" fill="#efefef"/>
<path d="M946.9 53.8L953.4 55.6V70.4L946.9 73.8Z" fill="#d6d6d6"/>
<path d="M940.4 86.2L945.2 87.6"/>
<circle cx="955.5" cy="81.4" r="8.6" fill="#efefef" stroke="#f3f2f1" stroke-width="3"/>
<circle cx="955.5" cy="81.4" r="8.6" fill="#efefef" stroke-width="1.4"/>
<ellipse cx="955.5" cy="81.4" rx="3.6" ry="8.6" stroke-width="1.2"/>
<path d="M947.2 78.9H963.8M947.2 84H963.8" stroke-width="1.2"/>
<!-- sparklines -->
<path d="M1004.9 56V85.6M999.2 61.3H1034.8M999.2 80.2H1034.8M1058.8 56V85.6M1053.1 61.3H1088.7M1053.1 80.2H1088.7M1112.8 56V85.6M1107 61.3H1142.7M1107 80.2H1142.7" stroke-width="1.4" stroke="#9e9e9e"/>
<path d="M1005 71L1010 75.9L1016.4 66.2L1022.4 76.4L1030.5 65.6L1034.8 72.1" stroke-width="1.1"/>
<rect x="1062.7" y="70.3" width="4" height="7.6" fill="#d6d6d6"/>
<rect x="1070.3" y="65.4" width="4.2" height="12.5" fill="#d6d6d6"/>
<rect x="1077.5" y="67.6" width="4.2" height="10.3" fill="#d6d6d6"/>
<g fill="#b2b2b2"><rect x="1116.5" y="65.4" width="3.3" height="4.9"/><rect x="1121.6" y="65.4" width="3.3" height="4.9"/><rect x="1126.6" y="71.7" width="3.3" height="4.9"/><rect x="1131.4" y="71.7" width="3.3" height="4.9"/><rect x="1136.6" y="65.4" width="3.3" height="4.9"/></g>
<!-- Slicer -->
<rect x="1180" y="53.9" width="34" height="34.2" fill="#efefef" stroke="none"/>
<path d="M1203.5 88.1H1180V53.9H1214V71"/>
<rect x="1180" y="53.9" width="34" height="5.8" fill="#d6d6d6"/>
<rect x="1185" y="63.9" width="24.3" height="6.4" fill="#d6d6d6"/>
<rect x="1185" y="75.4" width="15.5" height="6.2" fill="#d6d6d6"/>
<path d="M1198.6 72.6H1216.5V75.8L1210.4 81.6V90.4H1204.9V81.6L1198.6 75.8Z" fill="#efefef" stroke="#f3f2f1" stroke-width="3"/>
<path d="M1198.6 72.6H1216.5V75.8L1210.4 81.6V90.4H1204.9V81.6L1198.6 75.8Z" fill="#efefef"/>
<!-- Timeline -->
<rect x="1237" y="60.5" width="34" height="21" fill="#efefef" stroke="none"/>
<path d="M1259 81.5H1237V60.5H1271V71"/>
<rect x="1237" y="60.5" width="34" height="4.7" fill="#d6d6d6"/>
<rect x="1240.7" y="70.5" width="6.2" height="5.8" fill="#d6d6d6"/>
<rect x="1250.3" y="70.5" width="6.2" height="5.8" fill="#d6d6d6"/>
<path d="M1259.5 70.5H1268" />
<path d="M1255.7 72.6H1273.7V75.8L1267.6 81.6V90.4H1262.1V81.6L1255.7 75.8Z" fill="#efefef" stroke="#f3f2f1" stroke-width="3"/>
<path d="M1255.7 72.6H1273.7V75.8L1267.6 81.6V90.4H1262.1V81.6L1255.7 75.8Z" fill="#efefef"/>
<!-- Link -->
<path d="M1320.6 74.2H1321.8A7.8 7.8 0 0 1 1321.8 58.6H1331.2A7.8 7.8 0 0 1 1339 66.4A7.8 7.8 0 0 1 1331.2 74.2H1326.8" stroke-width="1.4"/>
<path d="M1341.8 67.8A7.8 7.8 0 0 1 1340.4 83H1330.4A7.8 7.8 0 0 1 1330.4 67.6H1335.4" stroke-width="1.4"/>
<!-- Comment -->
<path d="M1395.4 66.4V77.8H1399V86L1406.7 77.8H1429V55.4H1405.2" fill="#efefef" stroke-width="1.4"/>
<path d="M1392 60.4H1411M1401.4 51V69.6" stroke-width="1.4"/>
<!-- chevrons -->
<g stroke="#8a8a8a" stroke-width="1">
<path d="M143.5 120.6L146.5 123.4L149.5 120.6"/>
<path d="M255.5 58.8L258.7 61.8L261.9 58.8"/>
<path d="M289.8 117.6L293 120.6L296.2 117.6"/>
<path d="M409.3 88L412.5 91L415.7 88"/>
<path d="M565.3 112.2L568.5 115.2L571.7 112.2"/>
<path d="M764.3 59.6L767.5 62.6L770.7 59.6"/>
<path d="M764.3 89L767.5 92L770.7 89"/>
<path d="M764.3 118L767.5 121L770.7 118"/>
<path d="M810.3 59.6L813.5 62.6L816.7 59.6"/>
<path d="M810.3 89L813.5 92L816.7 89"/>
<path d="M858.3 120.8L861.5 123.8L864.7 120.8"/>
<path d="M958.5 120.8L961.7 123.8L964.9 120.8"/>
<path d="M1328 120.8L1331.2 123.8L1334.4 120.8"/>
</g>
<!-- dialog launcher -->
<path d="M894.4 156V148.6H902M896.6 150.8L903 157.2M903.4 152.6V157.6H898.4" stroke="#9a9a9a" stroke-width="1"/>
<path d="M-1 156V148.6" stroke="none"/>
</g>
<!-- formula bar icons -->
<path d="M43.6 184.8L57.6 197.2M57.6 184.8L43.6 197.2" stroke="#bdbdbd" stroke-width="1.7" fill="none"/>
<path d="M88.6 191.6L94.8 197.6L104.4 185.4" stroke="#c6c6c6" stroke-width="2.4" fill="none"/>
<text x="133" y="197" font-family="Liberation Serif" font-style="italic" font-weight="bold" font-size="19" fill="#707070">f</text>
<text x="139.6" y="197" font-family="Liberation Serif" font-style="italic" font-weight="bold" font-size="16" fill="#707070">x</text>
</svg>

<div class=t style="left:13.18px;top:17.45px;font-size:17px;color:#333;font-weight:normal;transform:scaleX(1.0167);-webkit-text-stroke:0.35px #333;">Insert</div><div class=t style="left:83.83px;top:17.45px;font-size:17px;color:#444444;font-weight:normal;transform:scaleX(0.9744);">Draw</div><div class=t style="left:151.74px;top:17.45px;font-size:17px;color:#444444;font-weight:normal;transform:scaleX(0.9611);">Page Layout</div><div class=t style="left:272.72px;top:17.45px;font-size:17px;color:#444444;font-weight:normal;transform:scaleX(0.9797);">Formulas</div><div class=t style="left:369.52px;top:17.45px;font-size:17px;color:#444444;font-weight:normal;transform:scaleX(0.9829);">Data</div><div class=t style="left:433.46px;top:17.45px;font-size:17px;color:#444444;font-weight:normal;transform:scaleX(0.9382);">Review</div><div class=t style="left:515.20px;top:17.45px;font-size:17px;color:#444444;font-weight:normal;transform:scaleX(0.9649);">View</div><div class=t style="left:578.58px;top:17.45px;font-size:17px;color:#444444;font-weight:normal;transform:scaleX(1.0182);">Help</div><div class=t style="left:641.09px;top:17.45px;font-size:17px;color:#444444;font-weight:normal;transform:scaleX(0.9094);">SAP</div><div class=t style="left:699.60px;top:17.45px;font-size:17px;color:#444444;font-weight:normal;transform:scaleX(0.9381);">Analysis</div><div class=t style="left:787.70px;top:17.45px;font-size:17px;color:#444444;font-weight:normal;transform:scaleX(0.9617);">Analysis Design</div><div class=t style="left:931.15px;top:17.45px;font-size:17px;color:#444444;font-weight:normal;transform:scaleX(0.9514);">EPM</div><div class=t style="left:993.39px;top:17.45px;font-size:17px;color:#444444;font-weight:normal;transform:scaleX(1.0084);">Data Manager</div><div class=t style="left:1131.16px;top:16.77px;font-size:16.5px;color:#1c6b3a;font-weight:normal;transform:scaleX(1.0438);-webkit-text-stroke:0.5px #1c6b3a;">Header &amp; Footer</div><div class=t style="left:-50.85px;top:96.12px;font-size:15.5px;color:#a6a6a6;font-weight:normal;transform:scaleX(0.8483);">Recomm</div><div class=t style="left:1.71px;top:96.12px;font-size:15.5px;color:#a6a6a6;font-weight:normal;transform:scaleX(0.9878);">ended</div><div class=t style="left:-45.97px;top:116.13px;font-size:15.5px;color:#a6a6a6;font-weight:normal;transform:scaleX(0.9744);">PivotTables</div><div class=t style="left:55.00px;top:96.12px;font-size:15.5px;color:#a6a6a6;font-weight:normal;transform:scaleX(0.9378);">Table</div><div class=t style="left:120.38px;top:96.12px;font-size:15.5px;color:#a6a6a6;font-weight:normal;transform:scaleX(0.9218);">Pictures</div><div class=t style="left:202.49px;top:54.23px;font-size:15.5px;color:#a6a6a6;font-weight:normal;transform:scaleX(0.9078);">Shapes</div><div class=t style="left:202.48px;top:83.03px;font-size:15.5px;color:#a6a6a6;font-weight:normal;transform:scaleX(0.9194);">Icons</div><div class=t style="left:202.42px;top:112.03px;font-size:15.5px;color:#a6a6a6;font-weight:normal;transform:scaleX(0.9781);">3D Models</div><div class=t style="left:331.22px;top:54.23px;font-size:15.5px;color:#a6a6a6;font-weight:normal;transform:scaleX(0.9750);">SmartArt</div><div class=t style="left:331.27px;top:83.03px;font-size:15.5px;color:#a6a6a6;font-weight:normal;transform:scaleX(0.9325);">Screenshot</div><div class=t style="left:474.32px;top:65.62px;font-size:15.5px;color:#a6a6a6;font-weight:normal;transform:scaleX(0.9812);">Get Add-ins</div><div class=t style="left:474.29px;top:105.83px;font-size:15.5px;color:#a6a6a6;font-weight:normal;transform:scaleX(1.0053);">My Add-ins</div><div class=t style="left:629.83px;top:96.12px;font-size:15.5px;color:#a6a6a6;font-weight:normal;transform:scaleX(0.9660);">Recommended</div><div class=t style="left:659.07px;top:116.13px;font-size:15.5px;color:#a6a6a6;font-weight:normal;transform:scaleX(0.9318);">Charts</div><div class=t style="left:827.45px;top:96.12px;font-size:15.5px;color:#a6a6a6;font-weight:normal;transform:scaleX(0.9549);">PivotChart</div><div class=t style="left:934.49px;top:96.12px;font-size:15.5px;color:#a6a6a6;font-weight:normal;transform:scaleX(1.0111);">3D</div><div class=t style="left:922.70px;top:116.13px;font-size:15.5px;color:#a6a6a6;font-weight:normal;transform:scaleX(1.0034);">Map</div><div class=t style="left:1002.46px;top:96.12px;font-size:15.5px;color:#a6a6a6;font-weight:normal;transform:scaleX(0.9393);">Line</div><div class=t style="left:1044.03px;top:96.12px;font-size:15.5px;color:#a6a6a6;font-weight:normal;transform:scaleX(0.9750);">Column</div><div class=t style="left:1109.40px;top:96.12px;font-size:15.5px;color:#a6a6a6;font-weight:normal;transform:scaleX(1.0097);">Win/</div><div class=t style="left:1110.10px;top:116.13px;font-size:15.5px;color:#a6a6a6;font-weight:normal;transform:scaleX(0.9032);">Loss</div><div class=t style="left:1178.37px;top:96.12px;font-size:15.5px;color:#a6a6a6;font-weight:normal;transform:scaleX(0.9316);">Slicer</div><div class=t style="left:1225.80px;top:96.12px;font-size:15.5px;color:#a6a6a6;font-weight:normal;transform:scaleX(0.9603);">Timeline</div><div class=t style="left:1317.76px;top:96.12px;font-size:15.5px;color:#a6a6a6;font-weight:normal;transform:scaleX(0.9370);">Link</div><div class=t style="left:1378.02px;top:96.12px;font-size:15.5px;color:#a6a6a6;font-weight:normal;transform:scaleX(0.9803);">Comment</div><div class=t style="left:1476.00px;top:96.12px;font-size:15.5px;color:#555;font-weight:normal;transform:scaleX(1.1892);">Table</div><div class=t style="left:238.28px;top:147.15px;font-size:13px;color:#3b3a39;font-weight:normal;transform:scaleX(1.0187);">Illustrations</div><div class=t style="left:504.00px;top:147.15px;font-size:13px;color:#3b3a39;font-weight:normal;transform:scaleX(1.0159);">Add-ins</div><div class=t style="left:733.42px;top:147.15px;font-size:13px;color:#3b3a39;font-weight:normal;transform:scaleX(0.9838);">Charts</div><div class=t style="left:928.00px;top:147.15px;font-size:13px;color:#3b3a39;font-weight:normal;transform:scaleX(1.0226);">Tours</div><div class=t style="left:1039.01px;top:147.15px;font-size:13px;color:#3b3a39;font-weight:normal;transform:scaleX(0.9915);">Sparklines</div><div class=t style="left:1209.32px;top:147.15px;font-size:13px;color:#3b3a39;font-weight:normal;transform:scaleX(0.9765);">Filters</div><div class=t style="left:1315.57px;top:147.15px;font-size:13px;color:#3b3a39;font-weight:normal;transform:scaleX(0.9310);">Links</div><div class=t style="left:1379.60px;top:147.15px;font-size:13px;color:#3b3a39;font-weight:normal;transform:scaleX(0.9984);">Comments</div><div class=t style="left:181.43px;top:183.55px;font-size:16.3px;color:#222;font-weight:normal;transform:scaleX(0.9749);">Standards &amp; Custom Pass/Fail Status</div><div class=t style="left:89.66px;top:789.00px;font-size:16px;color:#000;font-weight:normal;transform:scaleX(1.0363);">&amp;[Picture]&nbsp; Tested by</div><div class=t style="left:243.70px;top:789.00px;font-size:16px;color:#000;font-weight:normal;transform:scaleX(1.0000);">:</div><div class=t style="left:704.89px;top:789.00px;font-size:16px;color:#000;font-weight:normal;transform:scaleX(1.1058);">&amp;[Date]</div><div class=t style="left:1359.51px;top:789.40px;font-size:16px;color:#000;font-weight:normal;transform:scaleX(0.9938);">Page 1 of 1</div><div class=t style="left:89.70px;top:813.75px;font-size:15px;color:#666;font-weight:normal;transform:scaleX(1.0000);">Footer</div>
</body></html>
